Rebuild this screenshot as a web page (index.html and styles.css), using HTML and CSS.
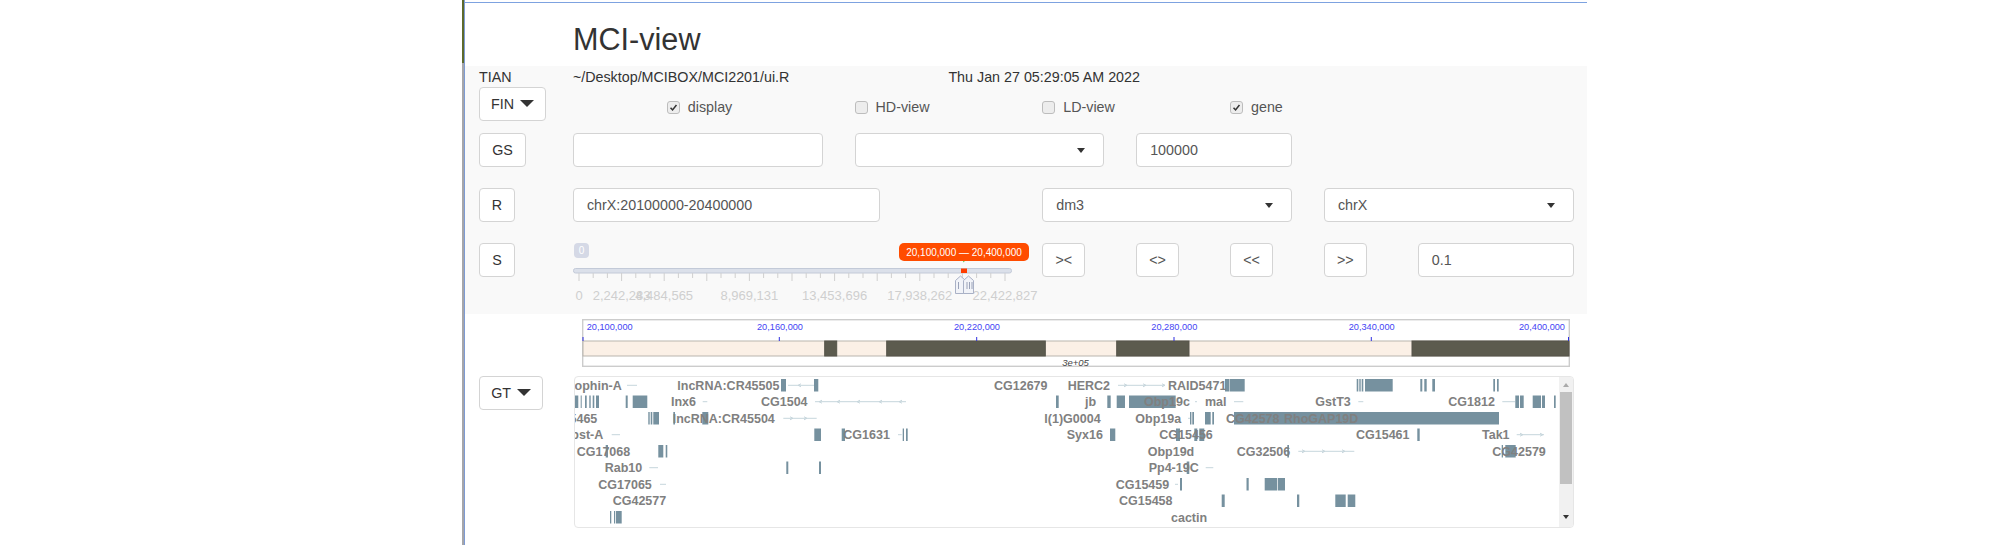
FILE: index.html
```html
<!DOCTYPE html>
<html lang="en">
<head>
<meta charset="utf-8">
<title>MCI-view</title>
<link rel="stylesheet" href="styles.css">
</head>
<body>
<div class="frame">
<main class="page">
  <h2 class="title">MCI-view</h2>
  <section class="well">
    <div class="row row-info">
      <span class="c1">TIAN</span>
      <span class="c2-4">~/Desktop/MCIBOX/MCI2201/ui.R</span>
      <span class="c6-4">Thu Jan 27 05:29:05 AM 2022</span>
    </div>
    <div class="row">
      <button class="btn btn-fin c1">FIN <i class="caret"></i></button>
      <label class="check c3"><span class="box on"><svg viewBox="0 0 13 13"><path d="M3 6.8 5.4 9.4 10 3.6" /></svg></span>display</label>
      <label class="check c5"><span class="box"></span>HD-view</label>
      <label class="check c7"><span class="box"></span>LD-view</label>
      <label class="check c9"><span class="box on"><svg viewBox="0 0 13 13"><path d="M3 6.8 5.4 9.4 10 3.6" /></svg></span>gene</label>
    </div>
    <div class="row gap-s">
      <button class="btn btn-sq c1">GS</button>
      <div class="field c2-3"></div>
      <div class="field select c5-3"><i class="caret-s"></i></div>
      <div class="field c8-2">100000</div>
    </div>
    <div class="row gap-l">
      <button class="btn btn-r c1">R</button>
      <div class="field field-region c2-5">chrX:20100000-20400000</div>
      <div class="field select c7-3">dm3<i class="caret-s"></i></div>
      <div class="field select c10-3">chrX<i class="caret-s"></i></div>
    </div>
    <div class="row gap-l">
      <button class="btn btn-r c1">S</button>
      <svg class="slider c2-5" viewBox="0 0 438 60" width="438" height="60">
        <rect class="s-pill0" x="1" y="0" width="15" height="15" rx="4"/>
        <text class="s-pilltext" x="8.5" y="11">0</text>
        <rect class="s-track" x="0.5" y="25.5" width="438" height="4.5" rx="2"/>
        <path class="s-tick" d="M6 30v8M20.200 30v5M34.400 30v5M48.600 30v8M62.800 30v5M77 30v5M91.200 30v8M105.400 30v5M119.600 30v5M133.800 30v8M148 30v5M162.200 30v5M176.400 30v8M190.600 30v5M204.800 30v5M219 30v8M233.200 30v5M247.400 30v5M261.600 30v8M275.800 30v5M290 30v5M304.200 30v8M318.400 30v5M332.600 30v5M346.800 30v8M361 30v5M375.200 30v5M389.400 30v8M403.600 30v5M417.800 30v5M432 30v8"/>
        <text class="s-lab" x="6" y="56.500">0</text>
        <text class="s-lab" x="48.600" y="56.500">2,242,283</text>
        <text class="s-lab" x="91.200" y="56.500">4,484,565</text>
        <text class="s-lab" x="176.400" y="56.500">8,969,131</text>
        <text class="s-lab" x="261.600" y="56.500">13,453,696</text>
        <text class="s-lab" x="346.800" y="56.500">17,938,262</text>
        <text class="s-lab" x="432" y="56.500">22,422,827</text>
        <rect class="s-bar" x="388" y="25.500" width="6" height="4.500"/>
        <path class="s-green" d="M389.300 16.500h3l-1.500 3z"/>
        <rect class="s-range" x="326" y="0" width="130" height="18" rx="5"/>
        <text class="s-rangetext" x="391" y="12.500">20,100,000 — 20,400,000</text>
        <path class="s-hand" d="M382.500 50.500v-13l5-4.500 5 4.500v13z"/>
        <path class="s-hand" d="M390.500 50.500v-13l5-4.500 5 4.500v13z"/>
        <path class="s-grip" d="M385.500 39v7M394 39v7M396.500 39v7M399 39v7"/>
      </svg>
      <button class="btn btn-nav c7">&gt;&lt;</button>
      <button class="btn btn-nav c8">&lt;&gt;</button>
      <button class="btn btn-nav c9">&lt;&lt;</button>
      <button class="btn btn-nav c10">&gt;&gt;</button>
      <div class="field c11-2">0.1</div>
    </div>
  </section>

  <svg class="ruler" viewBox="582 319 988 48" width="988" height="48">
    <rect class="r-box" x="582.700" y="319.700" width="986.600" height="46.600"/>
    <rect class="r-band" x="583" y="341" width="986" height="15"/>
    <rect class="r-dark" x="824.700" y="341" width="12" height="15"/>
    <rect class="r-dark" x="886.700" y="341" width="158.600" height="15"/>
    <rect class="r-dark" x="1116.700" y="341" width="72.300" height="15"/>
    <rect class="r-dark" x="1412" y="341" width="157" height="15"/>
    <path class="r-tick" d="M583 337v4M779.300 337v4M976.700 337v4M1174 337v4M1371.300 337v4M1568.500 337v4"/>
    <text class="r-lab" x="586.700" y="330.300">20,100,000</text>
    <text class="r-lab" x="757" y="330.300">20,160,000</text>
    <text class="r-lab" x="954" y="330.300">20,220,000</text>
    <text class="r-lab" x="1151.300" y="330.300">20,280,000</text>
    <text class="r-lab" x="1348.700" y="330.300">20,340,000</text>
    <text class="r-lab" x="1519" y="330.300">20,400,000</text>
    <text class="r-len" x="1075.500" y="365.500">3e+05</text>
  </svg>

  <div class="genes-row">
    <button class="btn btn-gt">GT <i class="caret"></i></button>
    <div class="genebox">
      <svg class="tracks" viewBox="575 377 984 150" width="984" height="150">
        <g class="intron">
          <path d="M627 385.300h10M788 385.300h26M1118 385.300h47M702.700 401.700h4.600M815 401.700h91M1195 401.700h2M1234 401.700h9.300M1358.300 401.700h5M1502.300 401.700h12.700M783.300 418.300h33.400M1188 418.300h2M611.700 434.700h8.300M898 434.700h3.700M1516.700 434.700h27.300M1298.300 451.300h56M649.300 467.700h8.700M1205.700 467.700h7.600M660 484.300h6M1175 484.300h3"/>
          <path d="M801 383.800l-3 1.500 3 1.500M1124 383.800l3 1.500-3 1.500M1143 383.800l3 1.500-3 1.500M1162 383.800l3 1.500-3 1.500M822 400.200l-3 1.500 3 1.500M840 400.200l-3 1.500 3 1.500M860 400.200l-3 1.500 3 1.500M882 400.200l-3 1.500 3 1.500M902 400.200l-3 1.500 3 1.500M790 416.800l3 1.500-3 1.500M804 416.800l3 1.500-3 1.500M1520 433.200l3 1.500-3 1.500M1540 433.200l3 1.500-3 1.500M1302 449.800l3 1.500-3 1.500M1322 449.800l3 1.500-3 1.500M1342 449.800l3 1.500-3 1.500"/>
        </g>
        <g class="exons">
          <path d="M781 379h5v12.600h-5zM814 379h4.300v12.600h-4.300zM1225 379h4v12.600h-4zM1229.500 379h15.200v12.600h-15.200zM1356.700 379h1.600v12.600h-1.600zM1359.300 379h1.400v12.600h-1.400zM1361.700 379h1.600v12.600h-1.600zM1365 379h27.700v12.600h-27.700zM1420.300 379h2v12.600h-2zM1424.300 379h2.400v12.600h-2.400zM1432.300 379h2.700v12.600h-2.700zM1493.300 379h1.700v12.600h-1.700zM1497 379h1.700v12.600h-1.700z"/>
          <path d="M575 395.400h3.300v12.600h-3.300zM580.700 395.400h1v12.600h-1zM585 395.400h1.700v12.600h-1.700zM589.300 395.400h1.400v12.600h-1.400zM592.700 395.400h1.600v12.600h-1.600zM596 395.400h3v12.600h-3zM625.700 395.400h2v12.600h-2zM632.700 395.400h14.600v12.600h-14.600zM1056 395.400h2.700v12.600h-2.700zM1107.300 395.400h3.400v12.600h-3.400zM1116.700 395.400h8.300v12.600h-8.300zM1129 395.400h46.700v12.600h-46.700zM1515.300 395.400h3.700v12.600h-3.700zM1520 395.400h3.700v12.600h-3.700zM1532.700 395.400h8.300v12.600h-8.300zM1542 395.400h3v12.600h-3zM1554 395.400h1.700v12.600h-1.700z"/>
          <path d="M648.300 412h1.400v12.600h-1.400zM650.700 412h1.600v12.600h-1.600zM653.300 412h5.700v12.600h-5.700zM673.300 412h1.700v12.600h-1.700zM702.300 412h6v12.600h-6zM1190 412h1.400v12.600h-1.400zM1192.300 412h1.700v12.600h-1.700zM1205 412h5.700v12.600h-5.700zM1212.300 412h1.700v12.600h-1.700zM1234 412h265v12.600h-265z"/>
          <path d="M814.300 428.400h6.700v12.600h-6.700zM841.700 428.400h3.300v12.600h-3.300zM902.700 428.400h1.300v12.600h-1.300zM906 428.400h1.700v12.600h-1.700zM1110 428.400h5.300v12.600h-5.300zM1176 428.400h4v12.600h-4zM1194.300 428.400h3v12.600h-3zM1199.300 428.400h5v12.600h-5zM1417.300 428.400h2.400v12.600h-2.400z"/>
          <path d="M605.700 445h2.300v12.600h-2.300zM658.300 445h5v12.600h-5zM665.700 445h1.600v12.600h-1.600zM1287.300 445h1.700v12.600h-1.700zM1501.700 445h1.300v12.600h-1.300zM1505.300 445h10.400v12.600h-10.400z"/>
          <path d="M786.300 461.400h2v12.600h-2zM819 461.400h2v12.600h-2zM1186.700 461.400h2.600v12.600h-2.600z"/>
          <path d="M1180 478h2v12.600h-2zM1246.500 478h2.200v12.600h-2.200zM1264.700 478h12.600v12.600h-12.600zM1278 478h7v12.600h-7z"/>
          <path d="M1221.700 494.400h3v12.600h-3zM1297 494.400h2.300v12.600h-2.300zM1335.300 494.400h10.400v12.600h-10.400zM1347.700 494.400h7.600v12.600h-7.600z"/>
          <path d="M610 511h1.300v12.600h-1.300zM614 511h1.200v12.600h-1.200zM616 511h5.700v12.600h-5.700z"/>
        </g>
        <g class="labels">
          <text x="574.500" y="389.600">ophin-A</text>
          <text x="677.300" y="389.600">lncRNA:CR45505</text>
          <text x="994" y="389.600">CG12679</text>
          <text x="1067.700" y="389.600">HERC2</text>
          <text x="1168" y="389.600">RAID5471</text>
          <text x="671" y="406">Inx6</text>
          <text x="761" y="406">CG1504</text>
          <text x="1085" y="406">jb</text>
          <text x="1144" y="406">Obp19c</text>
          <text x="1205" y="406">mal</text>
          <text x="1315.300" y="406">GstT3</text>
          <text x="1448.300" y="406">CG1812</text>
          <text class="end" x="597.300" y="422.600">CG5465</text>
          <text x="672.700" y="422.600">lncRNA:CR45504</text>
          <text x="1044.300" y="422.600">l(1)G0004</text>
          <text x="1135.300" y="422.600">Obp19a</text>
          <text x="1226" y="422.600">CG42578</text>
          <text x="1284" y="422.600">RhoGAP19D</text>
          <text class="end" x="603.300" y="439">Obst-A</text>
          <text x="843.300" y="439">CG1631</text>
          <text x="1066.700" y="439">Syx16</text>
          <text x="1159.300" y="439">CG15456</text>
          <text x="1356" y="439">CG15461</text>
          <text x="1482" y="439">Tak1</text>
          <text x="576.700" y="455.600">CG17068</text>
          <text x="1147.700" y="455.600">Obp19d</text>
          <text x="1236.700" y="455.600">CG32506</text>
          <text x="1492.300" y="455.600">CG42579</text>
          <text x="604.700" y="472">Rab10</text>
          <text x="1148.700" y="472">Pp4-19C</text>
          <text x="598.300" y="488.600">CG17065</text>
          <text x="1115.700" y="488.600">CG15459</text>
          <text x="612.700" y="505">CG42577</text>
          <text x="1119" y="505">CG15458</text>
          <text x="1171" y="522.300">cactin</text>
        </g>
      </svg>
      <div class="scrollbar">
        <i class="arrow-up"></i>
        <div class="thumb"></div>
        <i class="arrow-down"></i>
      </div>
    </div>
  </div>
</main>
</div>
</body>
</html>
```
FILE: styles.css
```css
* { box-sizing: border-box; }
html, body { margin: 0; padding: 0; background: #fff; }
body {
  font-family: "Liberation Sans", Arial, sans-serif;
  font-size: 14.3px;
  line-height: 20px;
  color: #333;
  height: 545px;
  overflow: hidden;
}
.frame {
  margin-left: 462px;
  width: 1125px;
  height: 545px;
  padding-left: 2px;
  background: linear-gradient(#5d6a2c 0, #5d6a2c 63px, #a6a6aa 63px, #a6a6aa 100%) left top / 2px 100% no-repeat;
}
.page {
  height: 545px;
  border-left: 1px solid #7d9bd4;
  background: linear-gradient(#7da2e0, #7da2e0) left 2px / 100% 1px no-repeat #fff;
}
.title {
  margin: 0;
  padding: 21px 0 0 108px;
  height: 66px;
  font-size: 30.6px;
  font-weight: 400;
  line-height: 37px;
  color: #333;
}
.well {
  height: 248px;
  padding: 1px 0 0 14px;
  background: #f9f9f9;
}
.row {
  display: grid;
  grid-template-columns: repeat(12, 62.200px);
  grid-template-rows: 34px;
  column-gap: 31.700px;
  height: 34px;
  align-items: center;
  color: #555;
}
.row-info { height: 20px; grid-template-rows: 20px; color: #333; }
.gap-s { margin-top: 12px; }
.gap-l { margin-top: 21px; }

.c1 { grid-column: 1; }
.c2-4 { grid-column: 2 / span 4; }
.c2-5 { grid-column: 2 / span 5; }
.c6-4 { grid-column: 6 / span 4; }
.c3 { grid-column: 3 / span 2; }
.c5 { grid-column: 5 / span 2; }
.c7 { grid-column: 7; }
.c8 { grid-column: 8; }
.c9 { grid-column: 9; }
.c10 { grid-column: 10; }
.c2-3 { grid-column: 2 / span 3; }
.c5-3 { grid-column: 5 / span 3; }
.c8-2 { grid-column: 8 / span 2; }
.c7-3 { grid-column: 7 / span 3; }
.c10-3 { grid-column: 10 / span 3; }
.c11-2 { grid-column: 11 / span 2; }
label.c7, label.c9 { grid-column-end: span 2; }

.btn {
  height: 34px;
  padding: 0;
  font: inherit;
  color: #333;
  background: #fff;
  border: 1px solid #d4d4d4;
  border-radius: 4px;
  white-space: nowrap;
}
.btn-fin { width: 67px; justify-self: start; }
.btn-sq { width: 47px; justify-self: start; }
.btn-r { width: 36px; justify-self: start; }
.btn-nav { width: 43px; justify-self: start; color: #555; }
.btn-gt { width: 64px; flex: none; }

.caret {
  display: inline-block;
  width: 0;
  height: 0;
  margin-left: 2px;
  vertical-align: 2px;
  border-top: 7px solid #333;
  border-left: 7px solid transparent;
  border-right: 7px solid transparent;
}
.caret-s {
  position: absolute;
  right: 18px;
  top: 14px;
  width: 0;
  height: 0;
  border-top: 5px solid #333;
  border-left: 4.500px solid transparent;
  border-right: 4.500px solid transparent;
}

.check { display: flex; align-items: center; gap: 8px; margin-top: 6px; color: #555; }
.box {
  width: 13px;
  height: 13px;
  flex: none;
  border: 1px solid #bdbdbd;
  border-radius: 3px;
  background: #ededed;
}
.box svg { display: block; width: 11px; height: 11px; }
.box path { fill: none; stroke: #333; stroke-width: 1.800; }

.field {
  position: relative;
  height: 34px;
  padding: 0 13px;
  line-height: 32px;
  color: #555;
  background: #fff;
  border: 1px solid #d4d4d4;
  border-radius: 4px;
}
.field-region { width: 307px; justify-self: start; }

.slider { align-self: start; overflow: visible; }
.s-pill0 { fill: #d5d9e6; }
.s-pilltext { fill: #fff; font-size: 10px; text-anchor: middle; }
.s-track { fill: #dbe0ea; stroke: #c3cad8; stroke-width: 1; }
.s-tick { stroke: #cfcfcf; stroke-width: 1; fill: none; }
.s-lab { fill: #cfcfcf; font-size: 13px; text-anchor: middle; }
.s-bar { fill: #ff3d00; }
.s-green { fill: #35c335; }
.s-range { fill: #ff4c00; }
.s-rangetext { fill: #fff; font-size: 10px; text-anchor: middle; }
.s-hand { fill: #f1f3f8; stroke: #a9b1c6; stroke-width: 1; stroke-linejoin: round; }
.s-grip { stroke: #9aa2b8; stroke-width: 1; fill: none; }

.ruler { display: block; margin: 5px 0 0 117px; overflow: visible; }
.r-box { fill: #fff; stroke: #cccccc; stroke-width: 1.400; }
.r-band { fill: #fbf0e6; stroke: #b9b5ae; stroke-width: 1; }
.r-dark { fill: #5c5b4e; stroke: #56554a; stroke-width: 1; }
.r-tick { stroke: #2f2fe0; stroke-width: 1; fill: none; }
.r-lab { fill: #4444f4; font-size: 9.200px; }
.r-len { fill: #444; font-size: 9.500px; font-style: italic; text-anchor: middle; }

.genes-row {
  display: flex;
  align-items: flex-start;
  gap: 31px;
  margin: 9px 0 0 14px;
}
.genebox {
  display: flex;
  width: 1000px;
  height: 152px;
  overflow: hidden;
  background: #fff;
  border: 1px solid #e6e6e6;
  border-radius: 4px;
}
.tracks { display: block; flex: none; }
.intron path { stroke: #c6d6dc; stroke-width: 1; fill: none; }
.exons path { fill: #76919f; }
.labels text { fill: #808080; font-size: 12.500px; font-weight: 700; }
.labels .end { text-anchor: end; }

.scrollbar {
  flex: none;
  width: 14px;
  background: #f1f1f1;
  display: flex;
  flex-direction: column;
  align-items: center;
}
.thumb { width: 12px; height: 92px; margin-top: 5px; background: #c1c1c1; }
.arrow-up {
  margin-top: 6px;
  width: 0;
  height: 0;
  border-bottom: 4px solid #aaa;
  border-left: 3.500px solid transparent;
  border-right: 3.500px solid transparent;
}
.arrow-down {
  margin-top: 31px;
  width: 0;
  height: 0;
  border-top: 4px solid #333;
  border-left: 3.500px solid transparent;
  border-right: 3.500px solid transparent;
}
```
